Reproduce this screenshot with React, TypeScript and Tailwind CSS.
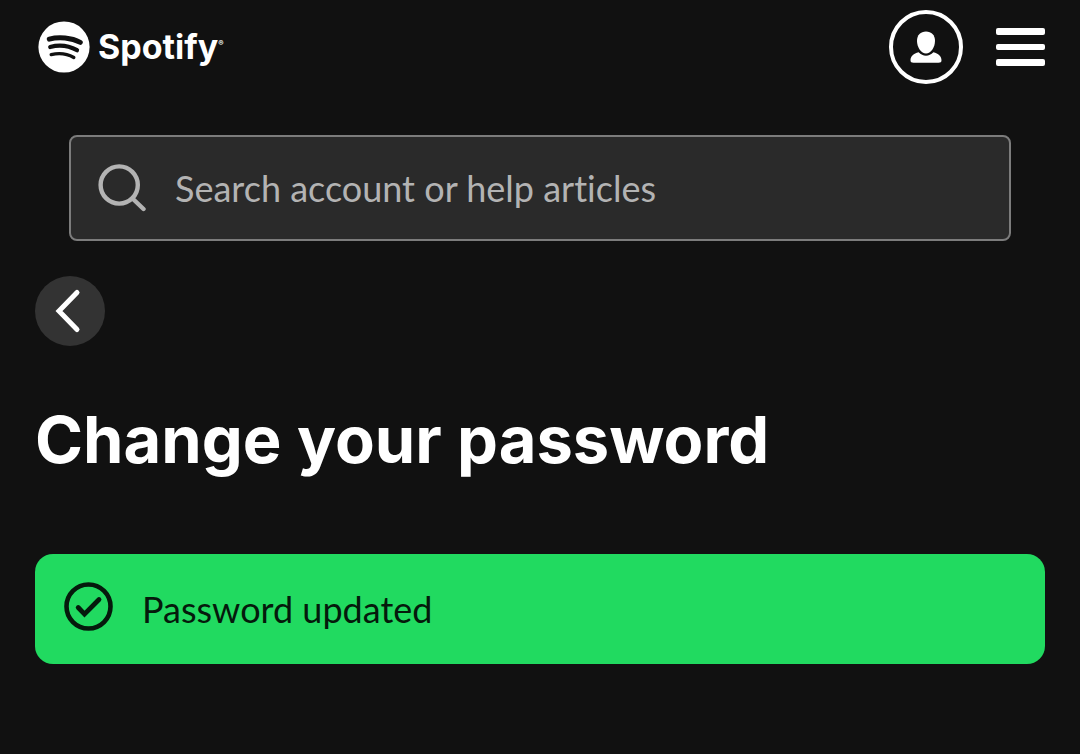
import { useState } from "react"

function SpotifyLogo() {
  return (
    <a href="#home" aria-label="Spotify" className="flex items-center gap-2 pl-[3px]">
      <svg viewBox="0 0 52 52" className="size-[52px]" fill="none" aria-hidden="true">
        <circle cx="26" cy="26" r="25.6" fill="#fff" />
        <g stroke="#111" strokeLinecap="round">
          <path d="M11.3 18.2C21 15.6 33.5 16.8 42.3 21.4" strokeWidth="5" />
          <path d="M12.2 26C21 23.6 31 24.8 39 29.2" strokeWidth="4.2" />
          <path d="M13.2 33.6C21 31.7 29 32.6 35.8 36.4" strokeWidth="3.4" />
        </g>
      </svg>
      <span className="flex items-center font-['Inter',sans-serif] text-[34px] leading-[52px] font-bold">
        Spotify
        <sup className="text-[8px] leading-none">®</sup>
      </span>
    </a>
  )
}

function Header() {
  return (
    <header className="flex items-center justify-between px-[35px] pt-[10px]">
      <SpotifyLogo />
      <nav className="flex items-center gap-[33px]">
        <button
          type="button"
          aria-label="Profile"
          className="flex size-[74px] items-center justify-center rounded-full border-4 border-white"
        >
          <svg viewBox="0 0 32 32" className="size-8" fill="currentColor" aria-hidden="true">
            <path d="M16 .5c5.4 0 9 3.6 9 9.2 0 6.900-4.300 12.800-9 12.800S7 16.600 7 9.700C7 4.100 10.600.5 16 .5Z" />
            <path d="M8.600 21.300c2.200 2.300 4.700 3.400 7.400 3.400s5.200-1.100 7.400-3.400c5 1.300 8.100 4.200 8.100 7.900 0 1.800-1 2.500-3 2.500h-25c-2 0-3-.7-3-2.500 0-3.700 3.100-6.600 8.100-7.900Z" />
          </svg>
        </button>
        <button type="button" aria-label="Menu" className="flex w-[49px] flex-col gap-[9px]">
          <span className="h-[7px] w-full rounded-[2px] bg-white" />
          <span className="h-[6px] w-full rounded-[2px] bg-white" />
          <span className="h-[7px] w-full rounded-[2px] bg-white" />
        </button>
      </nav>
    </header>
  )
}

function SearchBox() {
  const [query, setQuery] = useState("")

  return (
    <form role="search" className="px-[69px] pt-[51px]" onSubmit={(e) => e.preventDefault()}>
      <label className="flex h-[106px] items-center gap-[29px] rounded-lg border-2 border-[#7c7c7c] bg-[#2a2a2a] px-[27px]">
        <svg
          viewBox="0 0 48 48"
          className="size-12 shrink-0 text-[#b3b3b3]"
          fill="none"
          stroke="currentColor"
          strokeWidth="4.4"
          strokeLinecap="round"
          aria-hidden="true"
        >
          <circle cx="21.2" cy="21" r="18.6" />
          <path d="M34.5 34.5 45.5 45" />
        </svg>
        <input
          type="search"
          value={query}
          onChange={(e) => setQuery(e.target.value)}
          aria-label="Search account or help articles"
          placeholder="Search account or help articles"
          className="min-w-0 flex-1 bg-transparent text-[36px] leading-[48px] text-white outline-none placeholder:text-[#b3b3b3]"
        />
      </label>
    </form>
  )
}

function SuccessBanner({ message }: { message: string }) {
  return (
    <div
      role="status"
      className="mt-[72px] flex min-h-[110px] items-center gap-7 rounded-[18px] bg-[#21da60] px-[29px] text-[#051a0c]"
    >
      <svg
        viewBox="0 0 50 50"
        className="mb-1 size-[50px] shrink-0"
        fill="none"
        stroke="currentColor"
        strokeLinecap="round"
        aria-hidden="true"
      >
        <circle cx="24.5" cy="24.5" r="22" strokeWidth="4.6" />
        <path d="m14.2 25.5 6.3 6.6L35 17.5" strokeWidth="4.8" />
      </svg>
      <p className="text-[36px] leading-[48px]">{message}</p>
    </div>
  )
}

export default function App() {
  return (
    <div className="min-h-screen bg-[#111] font-['Lato',sans-serif] text-white [font-variant-ligatures:none]">
      <Header />
      <SearchBox />
      <main className="px-[35px] pt-[35px]">
        <button
          type="button"
          aria-label="Back"
          className="flex size-[70px] items-center justify-center rounded-full bg-[#333]"
        >
          <svg
            viewBox="0 0 48 48"
            className="size-12"
            fill="none"
            stroke="currentColor"
            strokeWidth="5"
            strokeLinecap="round"
            aria-hidden="true"
          >
            <path d="M31 5.5 13 24l18 18.5" />
          </svg>
        </button>
        <h1 className="mt-[52px] font-['Inter',sans-serif] text-[65px] leading-[84px] font-bold">
          Change your password
        </h1>
        <SuccessBanner message="Password updated" />
      </main>
    </div>
  )
}
